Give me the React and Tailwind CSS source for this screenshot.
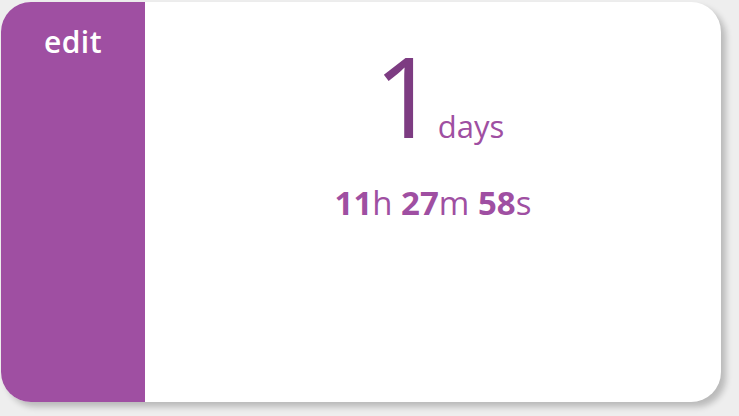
export default function App() {
  return (
    <div className="w-[739px] h-[416px] bg-[#eeeeee] pt-[2px] pl-[1px]" style={{ fontFamily: "'Open Sans', 'Noto Sans', sans-serif" }}>
      <div className="w-[720px] h-[400px] rounded-[30px] bg-white flex overflow-hidden shadow-[5px_5px_6px_rgba(0,0,0,0.22)]">
        <div className="w-[144px] h-full bg-[#9f4fa2] flex justify-center pt-[25px]">
          <span className="text-white text-[30px] leading-[30px] font-semibold tracking-[0.5px]">edit</span>
        </div>
        <div className="flex-1 flex flex-col items-center pt-[37px]">
          <div className="flex items-baseline pl-[12px]">
            <span className="text-[#7d3c82] text-[112px] leading-[112px] font-normal">1</span>
            <span className="text-[#9f4fa2] text-[31px] leading-[31px] font-normal">days</span>
          </div>
          <div className="mt-[35px] text-[#9f4fa2] text-[33px] leading-[34px]">
            <span className="font-bold">11</span>h <span className="font-bold">27</span>m <span className="font-bold">58</span>s
          </div>
        </div>
      </div>
    </div>
  );
}
